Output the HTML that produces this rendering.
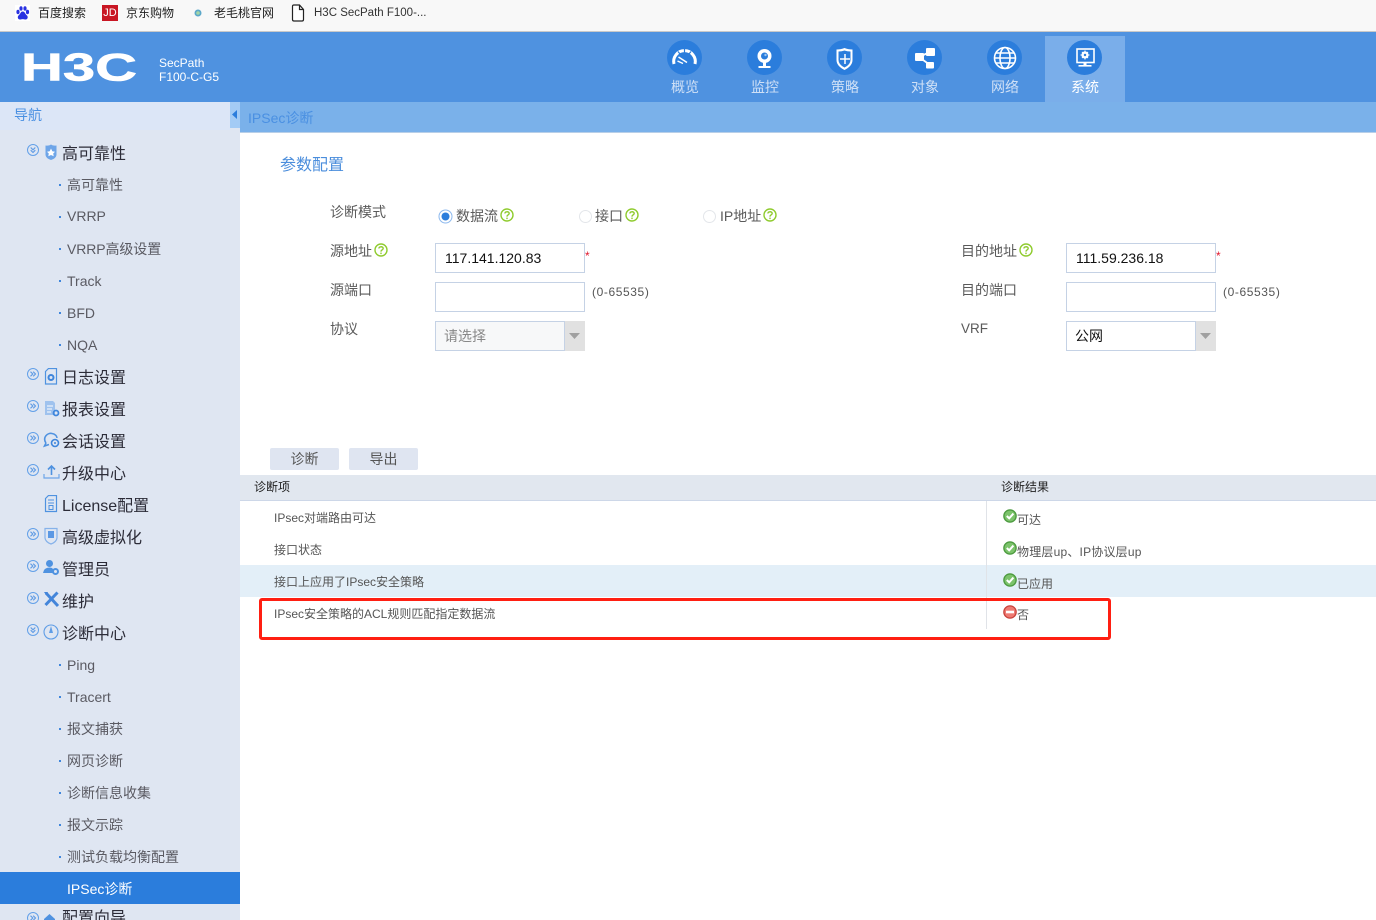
<!DOCTYPE html>
<html lang="zh-CN"><head><meta charset="utf-8"><title>H3C SecPath</title>
<style>
html,body{margin:0;padding:0;width:1376px;height:920px;overflow:hidden;background:#fff}
body{position:relative;font-family:"Liberation Sans","Noto Sans CJK SC",sans-serif;font-size:14px;color:#555}
div,span,svg{position:absolute}
.t{white-space:nowrap;line-height:20px}
.b{font-size:12px;color:#222}
.tab{font-size:14px;color:#cfe0f6;width:80px;text-align:center;top:77px}
.n{font-size:16px;color:#2c2c38;left:62px}
.s{font-size:14px;color:#5a5a62;left:67px}
.d{left:59px;width:2px;height:2px;background:#3f86dc}
.l{font-size:14px;color:#5a5a5a}
.in{box-sizing:border-box;width:150px;height:30px;border:1px solid #c5d2e5;background:#fff;padding-left:9px;line-height:28px;font-size:14px;color:#111}
.sm{font-size:12px;color:#555}
.c{left:27px;width:12px;height:12px}
.i{left:43px;width:18px;height:18px}
.q{width:14px;height:14px}
</style></head><body>
<svg width="0" height="0" style="position:absolute"><defs>
<g id="cr"><circle cx="6" cy="6" r="5.5" fill="none" stroke="#63a0e8"/><path d="M3.5 3.7 5.8 6 3.5 8.3M6.2 3.7 8.5 6 6.2 8.3" fill="none" stroke="#5d9ae4" stroke-width="1.1"/></g>
<g id="cd"><circle cx="6" cy="6" r="5.5" fill="none" stroke="#63a0e8"/><path d="M3.7 3.5 6 5.8 8.3 3.5M3.7 6.2 6 8.5 8.3 6.2" fill="none" stroke="#5d9ae4" stroke-width="1.1"/></g>
<g id="q"><circle cx="7" cy="7" r="6" fill="none" stroke="#8fcb2e" stroke-width="1.4"/><path d="M4.9 5.5C5 3.2 9.2 3.2 9.2 5.4 9.2 6.9 7 6.8 7 8.6" fill="none" stroke="#8fcb2e" stroke-width="1.4"/><rect x="6.3" y="9.6" width="1.4" height="1.5" fill="#8fcb2e"/></g>
<g id="ok"><circle cx="7" cy="7" r="6.8" fill="#4c9a3f"/><circle cx="7" cy="7" r="5.4" fill="#7cc36b"/><path d="M3.8 7 6.2 9.3 10.4 4.6" fill="none" stroke="#fff" stroke-width="2"/></g>
</defs></svg>

<!-- bookmarks bar -->
<div style="left:0;top:0;width:1376px;height:31px;background:#f8f8f8;border-bottom:1px solid #c9c9c9"></div>
<svg style="left:15px;top:5px" width="15" height="16" viewBox="0 0 15 16"><rect width="15" height="16" fill="#fff"/><ellipse cx="3" cy="7" rx="1.6" ry="2.2" fill="#2932e1"/><ellipse cx="6" cy="3.5" rx="1.6" ry="2.2" fill="#2932e1"/><ellipse cx="10" cy="3.5" rx="1.6" ry="2.2" fill="#2932e1"/><ellipse cx="12.5" cy="7" rx="1.6" ry="2.2" fill="#2932e1"/><path d="M7.7 6.5C5.5 6.5 5.5 9 3.5 10.5 2 12 3 15 5.5 14.5 7 14 8.5 14 10 14.5 12.500 15 13.500 12 12 10.500 10 9 10 6.500 7.700 6.500Z" fill="#2932e1"/></svg>
<div class="t" style="left:38px;top:3px;font-size:12px;color:#222">百度搜索</div>
<div style="left:102px;top:5px;width:16px;height:16px;background:#c91623;color:#fff;font-size:11px;line-height:16px;text-align:center">JD</div>
<div class="t" style="left:126px;top:3px;font-size:12px;color:#222">京东购物</div>
<svg style="left:193px;top:8px" width="10" height="10"><circle cx="5" cy="5" r="3.500" fill="#5ba8c9"/><circle cx="5" cy="5" r="1.800" fill="#a5d6a7"/></svg>
<div class="t" style="left:214px;top:3px;font-size:12px;color:#222">老毛桃官网</div>
<svg style="left:291px;top:4px" width="14" height="18" viewBox="0 0 14 18"><path d="M1.500 2.500Q1.500 1 3 1H8.500L12.500 5.500V15.500Q12.500 17 11 17H3Q1.500 17 1.500 15.500ZM8.500 1V5.500H12.500" fill="#fff" stroke="#222" stroke-width="1.200"/></svg>
<div class="t" style="left:314px;top:3px;font-size:11.500px;color:#333">H3C SecPath F100-...</div>

<!-- header -->
<div style="left:0;top:32px;width:1376px;height:70px;background:#4f92e0"></div>
<svg style="left:20px;top:50px" width="120" height="34" viewBox="0 0 120 34"><text x="1" y="30.500" font-family="Liberation Sans" font-weight="700" font-size="39" fill="#fff" stroke="#fff" stroke-width=".6" textLength="116" lengthAdjust="spacingAndGlyphs">H3C</text></svg>
<div class="t" style="left:159px;top:56px;font-size:12px;line-height:14px;color:#fff">SecPath<br>F100-C-G5</div>
<div style="left:1045px;top:36px;width:80px;height:66px;background:#7aaeea"></div>

<div style="left:667px;top:40px;width:35px;height:35px;border-radius:50%;background:#2b7ddc"></div>
<svg style="left:667px;top:40px" width="35" height="35" viewBox="0 0 35 35"><path d="M7 24A10.800 10.800 0 1 1 28 24" fill="none" stroke="#fff" stroke-width="3"/><path d="M11.500 17 20 22.500" stroke="#fff" stroke-width="1.500"/><path d="M10.500 21 16 23.500" stroke="#fff" stroke-width="1.500"/><path d="M11 11.500l2 2.500M17.500 9v3.500M24 11.500l-2 2.500" stroke="#2b7ddc" stroke-width="1.200"/></svg>
<div style="left:747px;top:40px;width:35px;height:35px;border-radius:50%;background:#2b7ddc"></div>
<svg style="left:747px;top:40px" width="35" height="35" viewBox="0 0 35 35"><circle cx="17.500" cy="16" r="7" fill="#fff"/><circle cx="17.500" cy="16" r="3.500" fill="#2b7ddc"/><circle cx="18.500" cy="15" r="1.200" fill="#9cc5f0"/><path d="M17.500 22v4" stroke="#fff" stroke-width="3"/><rect x="11.500" y="26" width="12" height="2" fill="#fff"/></svg>
<div style="left:827px;top:40px;width:35px;height:35px;border-radius:50%;background:#2b7ddc"></div>
<svg style="left:827px;top:40px" width="35" height="35" viewBox="0 0 35 35"><path d="M9.500 9.500Q14 9.500 17.500 8 21 9.500 25.500 9.500V20Q25.500 26 17.500 30 9.500 26 9.500 20Z" fill="#fff"/><path d="M11.500 11.500Q15 11.500 17.500 10.500 20 11.500 23.500 11.500V20Q23.500 24.500 17.500 27.500 11.500 24.500 11.500 20Z" fill="#2b7ddc"/><path d="M18 14v10M13 19h10" stroke="#fff" stroke-width="1.500"/></svg>
<div style="left:907px;top:40px;width:35px;height:35px;border-radius:50%;background:#2b7ddc"></div>
<svg style="left:907px;top:40px" width="35" height="35" viewBox="0 0 35 35"><path d="M12 17 23 12M12 17 23 25" stroke="#fff" stroke-width="1.800"/><rect x="8" y="13" width="9" height="8" rx="1" fill="#fff"/><rect x="19" y="8" width="9" height="8" rx="1" fill="#fff"/><rect x="19" y="22" width="8" height="6.500" rx="1" fill="#fff"/></svg>
<div style="left:987px;top:40px;width:35px;height:35px;border-radius:50%;background:#2b7ddc"></div>
<svg style="left:987px;top:40px" width="35" height="35" viewBox="0 0 35 35" fill="none" stroke="#fff" stroke-width="1.600"><circle cx="18" cy="18" r="10.500"/><ellipse cx="18" cy="18" rx="5" ry="10.500"/><path d="M7.500 18h21M9 13h18M9 23h18"/></svg>
<div style="left:1067px;top:40px;width:35px;height:35px;border-radius:50%;background:#2b7ddc"></div>
<svg style="left:1067px;top:40px" width="35" height="35" viewBox="0 0 35 35"><rect x="10" y="9" width="17" height="13.500" fill="none" stroke="#fff" stroke-width="1.600"/><circle cx="18" cy="15" r="2.600" fill="#2b7ddc" stroke="#fff" stroke-width="2"/><path d="M18 10.500v9M13.500 15h9M15 12l6 6M21 12l-6 6" stroke="#fff" stroke-width="1.100"/><circle cx="18" cy="15" r="1.200" fill="#2b7ddc"/><path d="M16.500 22.500h3V25h-3Z" fill="#fff"/><rect x="11.500" y="25" width="13" height="1.600" fill="#fff"/></svg>

<div class="t tab" style="left:645px">概览</div>
<div class="t tab" style="left:725px">监控</div>
<div class="t tab" style="left:805px">策略</div>
<div class="t tab" style="left:885px">对象</div>
<div class="t tab" style="left:965px">网络</div>
<div class="t tab" style="left:1045px;color:#fff">系统</div>

<!-- sidebar -->
<div style="left:0;top:102px;width:240px;height:818px;background:#dfe6f2"></div>
<div style="left:0;top:102px;width:230px;height:28px;background:#dce6f7"></div>
<div class="t" style="left:14px;top:105px;font-size:14px;color:#4a90e2">导航</div>
<div style="left:230px;top:102px;width:10px;height:26px;background:#a3cbf5"></div>
<svg style="left:232px;top:110px" width="6" height="10"><path d="M5 0V9L0 4.500Z" fill="#2b7ddc"/></svg>

<div class="t n" style="top:145px">高可靠性</div>
<div class="t s" style="top:175px">高可靠性</div>
<div class="t s" style="top:206px">VRRP</div>
<div class="t s" style="top:239px;letter-spacing:-.1px">VRRP高级设置</div>
<div class="t s" style="top:271px">Track</div>
<div class="t s" style="top:303px">BFD</div>
<div class="t s" style="top:335px">NQA</div>
<div class="t n" style="top:369px">日志设置</div>
<div class="t n" style="top:401px">报表设置</div>
<div class="t n" style="top:433px">会话设置</div>
<div class="t n" style="top:465px">升级中心</div>
<div class="t n" style="top:497px">License配置</div>
<div class="t n" style="top:529px">高级虚拟化</div>
<div class="t n" style="top:561px">管理员</div>
<div class="t n" style="top:593px">维护</div>
<div class="t n" style="top:625px">诊断中心</div>
<div class="t s" style="top:655px">Ping</div>
<div class="t s" style="top:687px">Tracert</div>
<div class="t s" style="top:719px">报文捕获</div>
<div class="t s" style="top:751px">网页诊断</div>
<div class="t s" style="top:783px">诊断信息收集</div>
<div class="t s" style="top:815px">报文示踪</div>
<div class="t s" style="top:847px">测试负载均衡配置</div>
<div style="left:0;top:872px;width:240px;height:32px;background:#2b7ddc"></div>
<div class="t s" style="top:879px;color:#fff">IPSec诊断</div>
<div class="t n" style="top:909px">配置向导</div>

<div class="d" style="top:184px"></div><div class="d" style="top:216px"></div><div class="d" style="top:248px"></div><div class="d" style="top:280px"></div><div class="d" style="top:312px"></div><div class="d" style="top:344px"></div>
<div class="d" style="top:664px"></div><div class="d" style="top:696px"></div><div class="d" style="top:728px"></div><div class="d" style="top:760px"></div><div class="d" style="top:792px"></div><div class="d" style="top:824px"></div><div class="d" style="top:856px"></div>

<svg class="c" style="top:144px"><use href="#cd"/></svg>
<svg class="c" style="top:368px"><use href="#cr"/></svg>
<svg class="c" style="top:400px"><use href="#cr"/></svg>
<svg class="c" style="top:432px"><use href="#cr"/></svg>
<svg class="c" style="top:464px"><use href="#cr"/></svg>
<svg class="c" style="top:528px"><use href="#cr"/></svg>
<svg class="c" style="top:560px"><use href="#cr"/></svg>
<svg class="c" style="top:592px"><use href="#cr"/></svg>
<svg class="c" style="top:624px"><use href="#cd"/></svg>
<svg class="c" style="top:912px"><use href="#cr"/></svg>

<svg class="i" style="top:144px" viewBox="0 0 18 18"><path d="M2.500 1.500Q6 2 8 .5 10 2 13.500 1.500V11Q13 14.500 8 16 3 14.500 2.500 11Z" fill="#6ea5e8"/><path d="M8 4.500 9.300 7.300 12 7.700 10.200 9.500 10.700 12.200 8 11 5.300 12.200 5.800 9.500 4 7.700 6.700 7.300Z" fill="#fff"/></svg>
<svg class="i" style="top:368px" viewBox="0 0 18 18"><path d="M2.500 3.500 5.500 .5H13.500V16H2.500Z" fill="none" stroke="#4f92e0" stroke-width="1.200"/><circle cx="8" cy="9.500" r="2.500" fill="none" stroke="#3f86dc" stroke-width="2"/></svg>
<svg class="i" style="top:400px" viewBox="0 0 18 18"><path d="M2 1H10L12 3V15H2Z" fill="#9fc2ee"/><path d="M4 6h6M4 9h5M4 12h4" stroke="#fff"/><circle cx="13" cy="13" r="2.500" fill="none" stroke="#3f86dc" stroke-width="1.800"/></svg>
<svg class="i" style="top:432px" viewBox="0 0 18 18"><path d="M3 11C-1 5 5 .5 9 1.500 12 2 14 4 14 6M3 11 1.500 14 6 12.500" fill="none" stroke="#4f92e0" stroke-width="1.600"/><circle cx="12" cy="11" r="3.500" fill="none" stroke="#3f86dc" stroke-width="1.600"/><circle cx="12" cy="11" r="1" fill="#3f86dc"/></svg>
<svg class="i" style="top:463px" viewBox="0 0 18 18"><path d="M8.500 12V3M5 6.500 8.500 3 12 6.500" fill="none" stroke="#4f92e0" stroke-width="1.600"/><path d="M1 11V15H16V11" fill="none" stroke="#6ea5e8" stroke-width="1.200"/></svg>
<svg class="i" style="top:495px" viewBox="0 0 18 18"><path d="M2.500 3.500 5.500 .5H13.500V16.500H2.500Z" fill="none" stroke="#4f92e0" stroke-width="1.200"/><path d="M5 5h6M5 8h6" stroke="#4f92e0"/><rect x="6" y="10.500" width="4" height="4" fill="none" stroke="#4f92e0"/></svg>
<svg class="i" style="top:527px" viewBox="0 0 18 18"><path d="M2 1.500H14V11Q13.500 15 8 17 2.500 15 2 11Z" fill="none" stroke="#86b2ea" stroke-width="1.200"/><rect x="5" y="4" width="6" height="7" fill="#5b98e4"/></svg>
<svg class="i" style="top:559px" viewBox="0 0 18 18"><circle cx="6.500" cy="4.500" r="3.500" fill="#4f92e0"/><path d="M0 14Q1 8.500 6.500 8.500 9 8.500 10 10V14Z" fill="#4f92e0"/><circle cx="12.500" cy="12.500" r="2.500" fill="none" stroke="#4f92e0" stroke-width="2"/></svg>
<svg class="i" style="top:591px" viewBox="0 0 18 18"><path d="M3 2 15 15" stroke="#4385da" stroke-width="3"/><path d="M14.500 1.500 2.500 14" stroke="#4385da" stroke-width="3"/><path d="M1 1 5 1 3 4Z" fill="#4385da"/></svg>
<svg class="i" style="top:623px" viewBox="0 0 18 18"><circle cx="8" cy="9" r="7" fill="none" stroke="#5f9de6" stroke-width="1.100"/><path d="M8 3 10 10H6Z" fill="#5f9de6"/></svg>
<svg class="i" style="top:911px" viewBox="0 0 18 18"><path d="M1 8 6.500 3 12 8V16H1Z" fill="#4f92e0"/></svg>

<!-- content header -->
<div style="left:240px;top:102px;width:1136px;height:30px;background:#7ab1ea;border-bottom:1px solid #b8cfe8"></div>
<div class="t" style="left:248px;top:108px;font-size:14px;color:#4a90e2">IPSec诊断</div>
<div class="t" style="left:280px;top:156px;font-size:16px;color:#4a8ddc">参数配置</div>

<!-- form -->
<div class="t l" style="left:330px;top:202px">诊断模式</div>
<svg style="left:438px;top:209px" width="15" height="15"><circle cx="7.500" cy="7.500" r="6.500" fill="#fff" stroke="#8db9ee"/><circle cx="7.500" cy="7.500" r="4" fill="#2b7ddc"/></svg>
<div class="t l" style="left:456px;top:206px">数据流</div>
<svg class="q" style="left:500px;top:208px"><use href="#q"/></svg>
<svg style="left:578px;top:209px" width="15" height="15"><circle cx="7.500" cy="7.500" r="6" fill="#fff" stroke="#e3e6ea"/></svg>
<div class="t l" style="left:595px;top:206px">接口</div>
<svg class="q" style="left:625px;top:208px"><use href="#q"/></svg>
<svg style="left:702px;top:209px" width="15" height="15"><circle cx="7.500" cy="7.500" r="6" fill="#fff" stroke="#e3e6ea"/></svg>
<div class="t l" style="left:720px;top:206px">IP地址</div>
<svg class="q" style="left:763px;top:208px"><use href="#q"/></svg>

<div class="t l" style="left:330px;top:241px">源地址</div>
<svg class="q" style="left:374px;top:243px"><use href="#q"/></svg>
<div class="in" style="left:435px;top:243px">117.141.120.83</div>
<div class="t" style="left:585px;top:246px;font-size:12px;color:#e0182d">*</div>
<div class="t l" style="left:330px;top:280px">源端口</div>
<div class="in" style="left:435px;top:282px"></div>
<div class="t sm" style="left:592px;top:282px;letter-spacing:.6px">(0-65535)</div>
<div class="t l" style="left:330px;top:319px">协议</div>
<div class="in" style="left:435px;top:321px;background:#f7f8f9;color:#888;width:130px;padding-left:8px">请选择</div>
<div style="left:565px;top:321px;width:20px;height:30px;background:#e1e1e1"></div>
<svg style="left:569px;top:333px" width="12" height="7"><path d="M0 0H11L5.500 6Z" fill="#a0a0a0"/></svg>

<div class="t l" style="left:961px;top:241px">目的地址</div>
<svg class="q" style="left:1019px;top:243px"><use href="#q"/></svg>
<div class="in" style="left:1066px;top:243px">111.59.236.18</div>
<div class="t" style="left:1216px;top:246px;font-size:12px;color:#e0182d">*</div>
<div class="t l" style="left:961px;top:280px">目的端口</div>
<div class="in" style="left:1066px;top:282px"></div>
<div class="t sm" style="left:1223px;top:282px;letter-spacing:.6px">(0-65535)</div>
<div class="t l" style="left:961px;top:319px;font-size:13.500px">VRF</div>
<div class="in" style="left:1066px;top:321px;width:130px;padding-left:8px">公网</div>
<div style="left:1196px;top:321px;width:20px;height:30px;background:#e1e1e1"></div>
<svg style="left:1200px;top:333px" width="12" height="7"><path d="M0 0H11L5.500 6Z" fill="#a0a0a0"/></svg>

<!-- buttons -->
<div style="left:270px;top:448px;width:69px;height:22px;background:#dfe5f1;border-radius:2px;text-align:center;line-height:23px;font-size:14px;color:#555">诊断</div>
<div style="left:349px;top:448px;width:69px;height:22px;background:#dfe5f1;border-radius:2px;text-align:center;line-height:23px;font-size:14px;color:#555">导出</div>

<!-- table -->
<div style="left:240px;top:475px;width:1136px;height:25px;background:#e1e7ef;border-bottom:1px solid #cdd7e8"></div>
<div style="left:240px;top:565px;width:1136px;height:32px;background:#e3eff8"></div>
<div style="left:986px;top:501px;width:1px;height:128px;background:#e0e3e8"></div>
<div class="t b" style="left:254px;top:477px">诊断项</div>
<div class="t b" style="left:1001px;top:477px">诊断结果</div>
<div class="t b" style="left:274px;top:508px;color:#555">IPsec对端路由可达</div>
<div class="t b" style="left:274px;top:540px;color:#555">接口状态</div>
<div class="t b" style="left:274px;top:572px;color:#555">接口上应用了IPsec安全策略</div>
<div class="t b" style="left:274px;top:604px;color:#555">IPsec安全策略的ACL规则匹配指定数据流</div>

<svg class="q" style="left:1003px;top:509px"><use href="#ok"/></svg>
<div class="t b" style="left:1017px;top:510px;color:#555">可达</div>
<svg class="q" style="left:1003px;top:541px"><use href="#ok"/></svg>
<div class="t b" style="left:1017px;top:542px;color:#555;letter-spacing:.2px">物理层up、IP协议层up</div>
<svg class="q" style="left:1003px;top:573px"><use href="#ok"/></svg>
<div class="t b" style="left:1017px;top:574px;color:#555">已应用</div>
<svg class="q" style="left:1003px;top:605px" viewBox="0 0 14 14"><circle cx="7" cy="7" r="6.800" fill="#c9413a"/><circle cx="7" cy="7" r="5.500" fill="#ee7a72"/><rect x="3" y="5.700" width="8" height="2.600" fill="#fff"/></svg>
<div class="t b" style="left:1017px;top:605px;color:#555">否</div>

<div style="left:259px;top:598px;width:852px;height:42px;box-sizing:border-box;border:3px solid #ff1f12;border-radius:3px"></div>
</body></html>
